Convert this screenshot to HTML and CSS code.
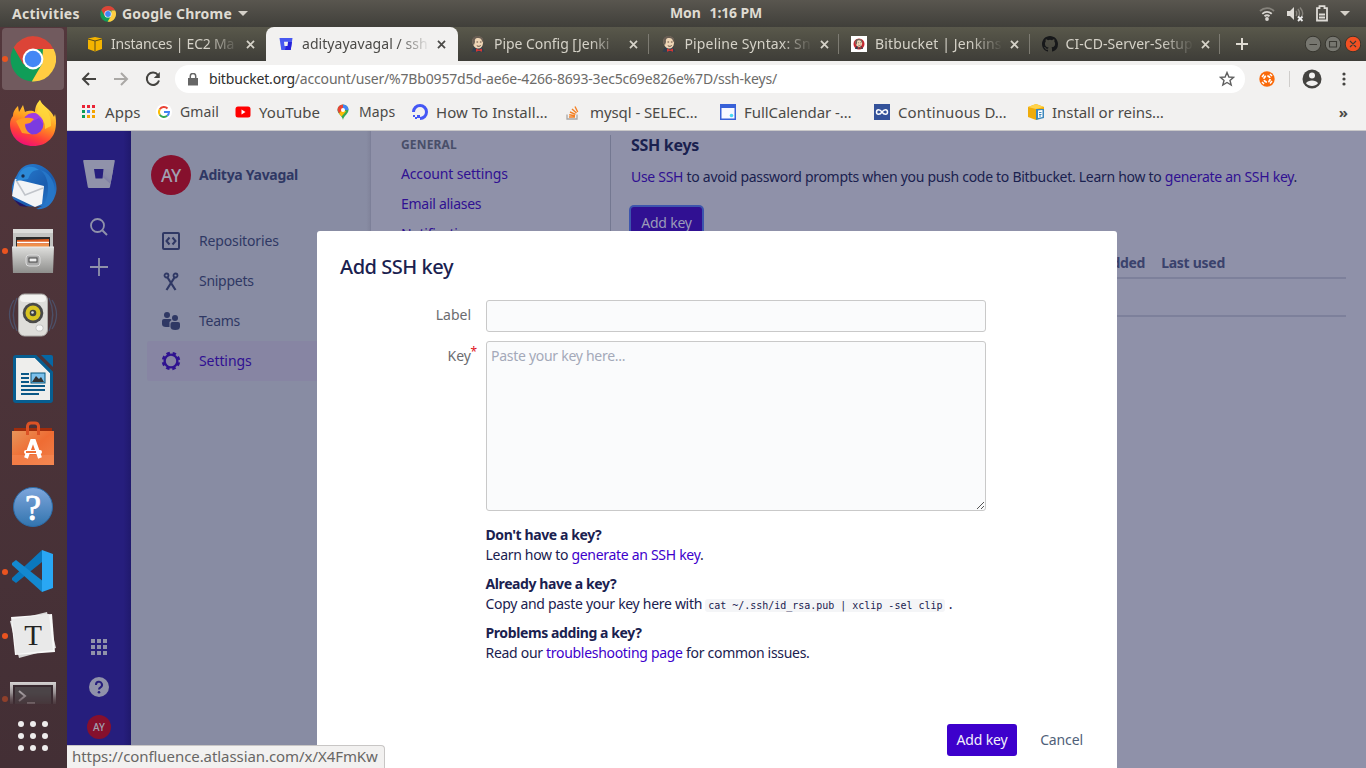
FILE: index.html
```html
<!DOCTYPE html>
<html lang="en">
<head>
<meta charset="utf-8">
<title>adityayavagal / ssh keys</title>
<link rel="stylesheet" href="styles.css">
</head>
<body>
<svg width="0" height="0" class="defs">
  <defs>
    <linearGradient id="steel" x1="0" y1="0" x2="0" y2="1"><stop offset="0" stop-color="#dededc"/><stop offset="1" stop-color="#8e8e8c"/></linearGradient>
    <linearGradient id="fire" x1="0.7" y1="0" x2="0.3" y2="1"><stop offset="0" stop-color="#fff14a"/><stop offset=".45" stop-color="#ff9a1f"/><stop offset=".75" stop-color="#ff4038"/><stop offset="1" stop-color="#ee0a7c"/></linearGradient>
    <linearGradient id="bird" x1="0" y1="0" x2="1" y2="1"><stop offset="0" stop-color="#2a83d6"/><stop offset=".6" stop-color="#1a5cae"/><stop offset="1" stop-color="#2f86d8"/></linearGradient>
    <linearGradient id="bag" x1="0" y1="0" x2="1" y2="1"><stop offset="0" stop-color="#e8955a"/><stop offset=".5" stop-color="#ef6c33"/><stop offset="1" stop-color="#f0804a"/></linearGradient>
    <linearGradient id="help" x1="0" y1="0" x2="0" y2="1"><stop offset="0" stop-color="#7ea6dc"/><stop offset="1" stop-color="#3274ae"/></linearGradient>
    <linearGradient id="term" x1="0" y1="0" x2="0" y2="1"><stop offset="0" stop-color="#d5d3d3"/><stop offset="1" stop-color="#5a4c50"/></linearGradient>
    <linearGradient id="bbfade" x1="1" y1="0" x2="0" y2="1"><stop offset="0" stop-color="#9092aa"/><stop offset=".4" stop-color="#8a8ba8"/><stop offset="1" stop-color="#5e5b98"/></linearGradient>
    <symbol id="chrome" viewBox="0 0 46 46">
      <circle cx="23" cy="23" r="22.5" fill="#109d58"/>
      <path d="M3.6 11.5A22.5 22.5 0 0 1 43.5 13L23 13 13.5 28.5Z" fill="#dc4437"/>
      <path d="M43.6 13A22.5 22.5 0 0 1 21.8 45.5L32 28 33 13Z" fill="#ffcd42"/>
      <circle cx="23" cy="23" r="10.4" fill="#fff"/><circle cx="23" cy="23" r="8.3" fill="#4387f5"/>
    </symbol>
    <symbol id="jenkins" viewBox="0 0 16 16">
      <path d="M1.500 16 3.500 11.500 12 11 14.500 16Z" fill="#313f4d"/>
      <path d="M2.5 5.5C2.3 2 5 .4 8 .4 11.5.4 13.6 3 13 7.3 12.7 10.500 11 12.600 8.500 12.600 5 12.600 2.700 9.500 2.500 5.500Z" fill="#efd6b6"/>
      <path d="M2.500 8C1 2 4 .2 7.500.1 11.500 0 14 2.400 13.400 7L12 5C11.500 2.700 10 1.500 7 2 5 2.400 4.600 4 5 6L4 9Z" fill="#695e54"/>
      <path d="M6.500 6h1.600M9.900 6h1.600M6.800 9.700C8.300 10.600 9.500 10.500 10.700 9.500" stroke="#4c3a30" stroke-width=".9" fill="none"/>
      <path d="M6 12.500 9 13.700 12 12.500 12 15.700 9 14.700 6 15.800Z" fill="#d33833"/>
    </symbol>
    <symbol id="x" viewBox="0 0 10 10"><path d="M1.800 1.800 8.200 8.200M8.200 1.800 1.800 8.200" stroke="currentColor" stroke-width="1.600"/></symbol>
  </defs>
</svg>

<header class="topbar">
  <span class="activities">Activities</span>
  <svg class="app-icon" width="16" height="16"><use href="#chrome"/></svg>
  <span class="app-name">Google Chrome</span><i class="caret"></i>
  <span class="clock"><span>Mon</span><span>1:16 PM</span></span>
  <span class="tray">
    <svg width="16" height="16" viewBox="0 0 16 16" fill="none" stroke="#d8d5d0" stroke-width="1.800"><path d="M1 5C5 1.200 11 1.200 15 5" stroke="#85827b"/><path d="M3.300 7.800C6 5.300 10 5.300 12.700 7.800"/><path d="M5.500 10.300C7 9 9 9 10.500 10.300"/><circle cx="8" cy="13" r="1.900" fill="#d8d5d0" stroke="none"/></svg>
    <svg width="18" height="16" viewBox="0 0 18 16"><path d="M1 5h3l4-4v13l-4-4H1Z" fill="#dedbd6"/><path d="M10 5C11 6 11 9 10 10M12 3C14 6 14 9 12 12M14 1.500C17 5 17 8 16 10" stroke="#85827b" stroke-width="1.500" fill="none"/><path d="M12 10.500 16.500 15M16.500 10.500 12 15" stroke="#eee" stroke-width="1.800"/></svg>
    <svg width="14" height="17" viewBox="0 0 14 17"><path d="M2 3.200H4.500V1.200H9.500V3.200H12V15.500H2Z" fill="none" stroke="#dedbd6" stroke-width="1.800"/><path d="M4 9.500h6M4 12.500h6" stroke="#dedbd6" stroke-width="1.800"/></svg>
    <i class="caret"></i>
  </span>
</header>

<div class="desktop">
  <aside class="dock">
    <div class="launcher current running"><svg width="46" height="46"><use href="#chrome"/></svg></div>
    <div class="launcher"><svg width="48" height="48" viewBox="0 0 48 48"><path d="M4 17C4 12 7 9 9 7L10 13 14 6 16 13C21 11 24 12 26 13 26 7 29 3 31 1 32 6 42 10 45 18L46 15C48 23 47 33 43 38 38 45 31 47 24 47 11 47 1 38 1 25 1 22 2 19 4 17Z" fill="url(#fire)"/><circle cx="24" cy="25" r="10.500" fill="#7b3be0"/><path d="M15 27C14 18 18 14 25 14 31 14 35 19 34 25L30 19Z" fill="#a03ae6"/><path d="M7 22C13 18 20 18 25 20L21 24 16 25C16 31 20 36 27 36L13 34Z" fill="#ff9a25"/><path d="M27 14C30 9 30 5 31 1 33 7 43 12 42 27L36 30C37 23 32 18 27 14Z" fill="#ffd83c" opacity=".8"/></svg></div>
    <div class="launcher"><svg width="50" height="50" viewBox="0 0 50 50"><path d="M9 13C14 1 27-1 37 6 47 13 51 24 47 34 44 43 37 48 28 47L34 44C20 46 7 43 4 34L7 36C2 30 3 22 9 13Z" fill="url(#bird)"/><path d="M7 17 36 24 34 42 27 45 4 34Z" fill="#f3f4f6"/><path d="M8 18 17 33 35 26" fill="none" stroke="#c1c4ca" stroke-width="1.500"/><path d="M11 13C15 3 25 3 31 8 22 8 22 14 20 17L8 19Z" fill="#2c8ad8"/><path d="M32 8C42 15 42 32 36 43L44 39C51 28 44 10 32 8Z" fill="#2676c8"/><path d="M5 37 20 45 12 44Z" fill="#241461"/><circle cx="15" cy="14" r="1.700" fill="#172b4d"/></svg></div>
    <div class="launcher running"><svg width="44" height="46" viewBox="0 0 44 46"><path d="M2 1H42V44H2Z" fill="#c4c4c2"/><path d="M2 1H42V5H2Z" fill="#dcdcda"/><path d="M5 9H39V20H5Z" fill="#2b2a2a"/><path d="M6 12 38 11V20H6Z" fill="#dd5d20"/><path d="M6 14.500H38" stroke="#fff" stroke-width="1.500"/><path d="M6 16H38V20H6Z" fill="#f0904a"/><path d="M1 19H43L42 45H2Z" fill="url(#steel)"/><path d="M1 19H43" stroke="#eee"/><rect x="15" y="27" width="14" height="11" rx="3" fill="#aaa" stroke="#ddd"/><rect x="18" y="30" width="8" height="4" fill="#eee" stroke="#444"/></svg></div>
    <div class="launcher"><svg width="50" height="46" viewBox="0 0 50 46"><path d="M6 8C0 17 0 28 6 37M9 6C4 17 4 28 9 39M44 8C50 17 50 28 44 37M41 6C46 17 46 28 41 39" fill="none" stroke="#4c5068" stroke-width="1.300"/><rect x="10.500" y="2" width="29" height="42" rx="6" fill="#deddda" stroke="#aaa9a6"/><rect x="12" y="3" width="26" height="7" rx="4" fill="#f3f2f0"/><circle cx="25" cy="21" r="10.300" fill="#4a4a49"/><circle cx="25" cy="21" r="7.500" fill="#d9c421"/><circle cx="25" cy="21" r="3.300" fill="#424240"/><circle cx="24.500" cy="20.500" r="1.300" fill="#ddd"/><rect x="28" y="33" width="7" height="6" rx="2.500" fill="#f7f7f7" stroke="#c4c4c2"/></svg></div>
    <div class="launcher"><svg width="42" height="48" viewBox="0 0 42 48"><path d="M4 0H24L41 17V45Q41 48 38 48H4Q1 48 1 45V3Q1 0 4 0Z" fill="#075e91"/><path d="M29 0H39Q41 0 41 2V12Z" fill="#0667a4"/><path d="M4 3H23L38 18V45H4Z" fill="#eeeeec"/><path d="M23 0V3L38 18H41V17L24 0Z" fill="#075e91"/><path d="M9 19h8M9 23h8M9 27h8M9 31h24M9 35h24M9 39h18" stroke="#0a5887" stroke-width="2"/><rect x="19" y="18" width="14" height="10" fill="#7cc1ec" stroke="#05577f"/><path d="M20 27 24 21 27 24 29 22 32 27Z" fill="#333"/></svg></div>
    <div class="launcher"><svg width="42" height="44" viewBox="0 0 42 44"><path d="M2 7H40V18H2Z" fill="#9f2c0c"/><path d="M0 10H42V44H0Z" fill="url(#bag)"/><path d="M15.500 14V5Q16 2 19 2H23Q26 2 26.500 5V14" fill="none" stroke="#dc5225" stroke-width="3"/><path d="M0 34H42V44H0Z" fill="#f68b57" opacity=".5"/><path d="M14 37 20 20H22L28 37" fill="none" stroke="#fff" stroke-width="4"/><rect x="12" y="29" width="18" height="4" rx="2" fill="#fff"/><path d="M14 31h10" stroke="#ee7138" stroke-width="2"/></svg></div>
    <div class="launcher"><svg width="42" height="42" viewBox="0 0 42 42"><circle cx="21" cy="21" r="19.500" fill="url(#help)" stroke="#2b6ca9"/><text x="21" y="34" class="help-mark">?</text></svg></div>
    <div class="launcher running"><svg width="44" height="44" viewBox="0 0 44 44"><path d="M1 29 31 1V13L5 34 1 31Z" fill="#0a78be"/><path d="M5 11 33 33 31 43 1 16V14Z" fill="#1389d0"/><path d="M31 1 42 5V39L31 43Z" fill="#29a7f4"/></svg></div>
    <div class="launcher running"><svg width="48" height="48" viewBox="0 0 48 48"><path d="M1 10 38 1 47 37 10 47Z" fill="#d8d8d8"/><path d="M2 6 43 3 46 41 6 44Z" fill="#f8f8f8"/><path d="M3 8 40 3 44 39 7 43Z" fill="#e9e9e9"/><text x="24" y="34" class="typora">T</text></svg></div>
    <div class="launcher cut running"><svg width="46" height="22" viewBox="0 0 46 22"><path d="M0 0H46V22H0Z" fill="url(#term)"/><path d="M3 3H43V22H3Z" fill="#37292f"/><path d="M5 5H41V22H5Z" fill="#4b4447"/><path d="M9 9 15 14 9 19M17 21h8" fill="none" stroke="#a39c9f" stroke-width="2"/></svg></div>
    <div class="app-grid"><i></i><i></i><i></i><i></i><i></i><i></i><i></i><i></i><i></i></div>
  </aside>

  <main class="window">
    <div class="tabs">
      <div class="tab first"><svg class="fav" width="16" height="16" viewBox="0 0 16 16"><path d="M1 2.500 8 1 15 2.500V13L8 15.500 1 13Z" fill="#f4b400"/><path d="M1 3 8 5 15 3M8 5V15" stroke="#594b1c" stroke-width="1" fill="none"/></svg><span class="title t1">Instances | EC2 Ma</span><svg class="close"><use href="#x"/></svg></div>
      <div class="tab active"><svg class="fav" width="16" height="16" viewBox="0 0 16 16"><path d="M1.500 2H14.500L12.700 14H3.300Z" fill="#4858f0"/><path d="M9 6H14L12.700 14H7Z" fill="#2721d9"/><path d="M6 5.800H10L9.500 10H6.500Z" fill="#f2f1f0"/></svg><span class="title">adityayavagal / ssh</span><svg class="close"><use href="#x"/></svg></div>
      <div class="tab"><svg class="fav" width="16" height="16"><use href="#jenkins"/></svg><span class="title t3">Pipe Config [Jenki</span><svg class="close"><use href="#x"/></svg></div>
      <div class="tab"><svg class="fav" width="16" height="16"><use href="#jenkins"/></svg><span class="title t2">Pipeline Syntax: Sn</span><svg class="close"><use href="#x"/></svg></div>
      <div class="tab"><svg class="fav" width="16" height="16" viewBox="0 0 16 16"><path d="M0 0H16V16H0Z" fill="#fff"/><circle cx="8" cy="8" r="5.500" fill="#c62932"/><svg x="3" y="1" width="10" height="14"><use href="#jenkins"/></svg></svg><span class="title t2">Bitbucket | Jenkins</span><svg class="close"><use href="#x"/></svg></div>
      <div class="tab"><svg class="fav" width="16" height="16" viewBox="0 0 16 16"><path fill="#17181a" d="M8 0C3.580 0 0 3.580 0 8c0 3.540 2.290 6.530 5.470 7.590.4.070.55-.17.55-.38v-1.490c-2.010.37-2.530-.49-2.690-.94-.09-.23-.48-.94-.82-1.130-.28-.15-.68-.52-.01-.53.63-.01 1.080.58 1.230.82.72 1.210 1.870.87 2.330.66.07-.52.28-.87.51-1.070-1.780-.2-3.640-.89-3.640-3.950 0-.87.31-1.590.82-2.150-.08-.2-.36-1.020.08-2.120 0 0 .67-.21 2.200.82a7.500 7.500 0 0 1 4 0c1.530-1.040 2.200-.82 2.200-.82.44 1.100.16 1.920.08 2.120.51.56.82 1.270.82 2.150 0 3.070-1.870 3.750-3.650 3.950.29.25.54.73.54 1.480v2.190c0 .21.15.46.55.38A8 8 0 0 0 16 8c0-4.420-3.580-8-8-8z"/></svg><span class="title">CI-CD-Server-Setup</span><svg class="close"><use href="#x"/></svg></div>
      <svg class="newtab" width="14" height="14" viewBox="0 0 14 14"><path d="M7 1V13M1 7H13" stroke="#dfdbd2" stroke-width="2"/></svg>
      <div class="controls">
        <svg width="56" height="18" viewBox="0 0 56 18"><g fill="#777770" stroke="#37362f"><circle cx="8" cy="9" r="7.800"/><circle cx="28" cy="9" r="7.800"/><circle cx="48" cy="9" r="7.800" fill="#f25022"/></g><path d="M4.500 9.500h7.500M24.500 6.500h7v5.500h-7ZM45 6 51 12M51 6 45 12" stroke="#3b3a34" stroke-width="1.100" fill="none"/></svg>
      </div>
    </div>

    <div class="toolbar">
      <svg class="nav" width="16" height="16" viewBox="0 0 16 16"><path d="M15 8H2M8 2 2 8 8 14" fill="none" stroke="#444340" stroke-width="2"/></svg>
      <svg class="nav" width="16" height="16" viewBox="0 0 16 16"><path d="M1 8H14M8 2 14 8 8 14" fill="none" stroke="#aaa8a5" stroke-width="2"/></svg>
      <svg class="nav" width="16" height="16" viewBox="0 0 16 16"><path d="M13 4A6.200 6.200 0 1 0 14 9.500" fill="none" stroke="#444340" stroke-width="2"/><path d="M14.800 1V7H8.800Z" fill="#444340"/></svg>
      <div class="omnibox">
        <svg width="10" height="13" viewBox="0 0 10 13"><path d="M0 5H10V12.500H0Z" fill="#666"/><path d="M2.300 5.500V3A2.700 2.500 0 0 1 7.700 3V5.500" fill="none" stroke="#666" stroke-width="1.500"/></svg>
        <span class="url"><b>bitbucket.org</b>/account/user/%7Bb0957d5d-ae6e-4266-8693-3ec5c69e826e%7D/ssh-keys/</span>
        <svg class="star" width="16" height="16" viewBox="0 0 16 16"><path d="M8 1.500 9.900 6 14.600 6.300 11 9.400 12.200 14 8 11.500 3.800 14 5 9.400 1.400 6.300 6.100 6Z" fill="none" stroke="#5f5f5f" stroke-width="1.400"/></svg>
      </div>
      <svg class="ext" width="16" height="16" viewBox="0 0 16 16"><circle cx="8" cy="8" r="7.700" fill="#fa6a0a"/><circle cx="8" cy="8" r="3.100" fill="none" stroke="#fff" stroke-width="1.800" stroke-dasharray="3.400 1.470"/><path d="M3 6 5 3.500M11 3 13 5M13 10 11 12.500M5 13 3 11" stroke="#fff" stroke-width="1.500"/></svg>
      <i class="vline"></i>
      <svg width="20" height="20" viewBox="0 0 20 20"><circle cx="10" cy="10" r="9.500" fill="#444340"/><circle cx="10" cy="6.500" r="3" fill="#f2f1f0"/><path d="M4 14.300C6 10.500 14 10.500 16 14.300 13 18 7 18 4 14.300Z" fill="#f2f1f0"/></svg>
      <svg class="more" width="4" height="14" viewBox="0 0 4 14"><g fill="#444340"><circle cx="2" cy="2" r="1.600"/><circle cx="2" cy="7" r="1.600"/><circle cx="2" cy="12" r="1.600"/></g></svg>
    </div>

    <nav class="bookmarks">
      <span class="bm" style="width:75px"><svg width="16" height="16" viewBox="0 0 16 16"><path d="M1 1h3v3H1ZM6 1h3v3H6ZM11 1h3v3h-3Z" fill="#ea2335"/><path d="M1 6h3v3H1ZM1 11h3v3H1Z" fill="#0b9d58"/><path d="M6 6h3v3H6Z" fill="#4285f4"/><path d="M11 6h3v3h-3ZM6 11h3v3H6ZM11 11h3v3h-3Z" fill="#f4a400"/></svg><span class="apps">Apps</span></span>
      <span class="bm" style="width:79px"><svg width="16" height="16" viewBox="0 0 16 16"><circle cx="8" cy="8" r="8" fill="#fff"/><g fill="none" stroke-width="2"><path d="M3.800 5.300A5 5 0 0 1 11.500 4.500" stroke="#ea4335"/><path d="M3.800 5.300A5 5 0 0 0 3.800 10.700" stroke="#fbbc05"/><path d="M3.800 10.700A5 5 0 0 0 11.200 11.800" stroke="#34a853"/><path d="M11.200 11.800A5 5 0 0 0 13 8H8" stroke="#4285f4"/></g></svg><span class="plain">Gmail</span></span>
      <span class="bm" style="width:100px"><svg width="16" height="16" viewBox="0 0 16 16"><rect x=".5" y="2.500" width="15" height="11" rx="2.500" fill="#f00"/><path d="M6.500 5.500 10.500 8 6.500 10.500Z" fill="#fff"/></svg><span>YouTube</span></span>
      <span class="bm" style="width:77px"><svg width="16" height="16" viewBox="0 0 16 16"><path d="M2.500 6A5.500 5.500 0 0 1 13.500 6C13.500 10 9 11 8 16 7 11 2.500 10 2.500 6Z" fill="#34a853"/><path d="M8 .5A5.500 5.500 0 0 1 13.500 6L8 6Z" fill="#4285f4"/><path d="M2.500 6A5.500 5.500 0 0 1 8 .5L8 6 4 9.500Z" fill="#ea4335"/><path d="M4 9.500 8 5 11 7.500 6.500 12.500Z" fill="#fbbc05"/><circle cx="8" cy="6" r="2" fill="#fff"/></svg><span class="plain">Maps</span></span>
      <span class="bm" style="width:154px"><svg width="16" height="16" viewBox="0 0 16 16"><path d="M8 14.500A6.500 6.500 0 1 0 1.500 8" fill="none" stroke="#4457f5" stroke-width="3"/><path d="M5 11h3v3H5ZM3 13h2v2H3ZM1 11h2v2H1Z" fill="#4457f5"/></svg><span>How To Install…</span></span>
      <span class="bm" style="width:154px"><svg width="16" height="16" viewBox="0 0 16 16"><path d="M1 10.500V15H11V10.500" fill="none" stroke="#a9a7a5" stroke-width="1.300"/><path d="M3 13H9M3.200 10.700 9 11.700M4 8 9.500 10.300M6 5 10.500 9M9 2.500 11.700 8" stroke="#f48024" stroke-width="1.400"/></svg><span class="sql">mysql - SELEC…</span></span>
      <span class="bm" style="width:154px"><svg width="16" height="16" viewBox="0 0 16 16"><path d="M0 0H16V16H0Z" fill="#3861d8"/><path d="M1.500 4H14.500V14.500H1.500Z" fill="#f8f9ff"/><circle cx="11.500" cy="11.500" r="1.800" fill="#49d9f5"/></svg><span class="fc">FullCalendar -…</span></span>
      <span class="bm" style="width:154px"><svg width="16" height="16" viewBox="0 0 16 16"><path d="M0 0H16V16H0Z" fill="#34529a"/><path d="M8 8C6 5 2.500 5 2.500 8S6 11 8 8 13.500 5 13.500 8 10 11 8 8" fill="none" stroke="#fff" stroke-width="1.500"/></svg><span class="cd">Continuous D…</span></span>
      <span class="bm" style="width:150px"><svg width="16" height="16" viewBox="0 0 16 16"><path d="M0 3 8 0 16 3V13L8 16 0 13Z" fill="#efac0b"/><path d="M0 3 8 0 16 3 8 5Z" fill="#ffd34a"/><path d="M8 5H16V14L8 16Z" fill="#3c88bd"/><path d="M10 6.500 14.500 6V13L10 14Z" fill="#fff"/><path d="M11 8.500h2.500M11 10.500h2.500M11 12h2" stroke="#3c88bd"/></svg><span class="inst">Install or reins…</span></span>
      <span class="overflow">»</span>
    </nav>

    <section class="page">
      <aside class="global-nav">
        <svg class="logo" width="32" height="28" viewBox="0 0 32 28"><path d="M1 0H31Q32 0 31.800 1L27 27Q26.800 28 26 28H6Q5 28 4.800 27L.2 1Q0 0 1 0Z" fill="#9092aa"/><path d="M11 9H30.200L27.500 24Z" fill="url(#bbfade)"/><path d="M11 9H20.500L19.500 18.500H12.500Z" fill="#261e7d"/></svg>
        <svg class="find" width="18" height="18" viewBox="0 0 18 18"><circle cx="7.500" cy="7.500" r="6.500" fill="none" stroke="#9092aa" stroke-width="1.800"/><path d="M12.500 12.500 17 17" stroke="#9092aa" stroke-width="2"/></svg>
        <svg class="plus" width="18" height="18" viewBox="0 0 18 18"><path d="M9 0V18M0 9H18" stroke="#9092aa" stroke-width="1.800"/></svg>
        <svg class="switcher" width="16" height="16" viewBox="0 0 16 16"><path d="M0 0h4v4H0ZM6 0h4v4H6ZM12 0h4v4h-4ZM0 6h4v4H0ZM6 6h4v4H6ZM12 6h4v4h-4ZM0 12h4v4H0ZM6 12h4v4H6ZM12 12h4v4h-4Z" fill="#9092aa"/></svg>
        <svg class="qmark" width="20" height="20" viewBox="0 0 20 20"><circle cx="10" cy="10" r="10" fill="#9092aa"/><path d="M7 8A3 3 0 1 1 11.500 10.300Q10 11.200 10 12.500" fill="none" stroke="#261e7d" stroke-width="2"/><circle cx="10" cy="15.300" r="1.300" fill="#261e7d"/></svg>
        <span class="avatar small">AY</span>
      </aside>
      <aside class="sidebar">
        <div class="user"><span class="avatar">AY</span><span>Aditya Yavagal</span></div>
        <div class="item"><svg width="20" height="20" viewBox="0 0 20 20" fill="none" stroke="#2f3864" stroke-width="2"><rect x="2" y="2" width="16" height="16" rx="1"/><path d="M8.500 6.500 5.500 10 8.500 13.500M11.500 6.500 14.500 10 11.500 13.500"/></svg><span class="repo">Repositories</span></div>
        <div class="item"><svg width="20" height="20" viewBox="0 0 20 20" fill="none" stroke="#2f3864" stroke-width="1.800"><circle cx="5.500" cy="4.500" r="2"/><circle cx="14.500" cy="4.500" r="2"/><path d="M6.500 6.500 14.500 19M13.500 6.500 5.500 19" stroke-width="2.200"/></svg><span>Snippets</span></div>
        <div class="item"><svg width="20" height="20" viewBox="0 0 20 20" fill="#2f3864"><circle cx="6" cy="4" r="3"/><path d="M1 10Q1 8 3 8H9Q10.500 8 10.500 9L8.500 11V16H5Q1 16 1 13Z"/><circle cx="14" cy="7" r="3"/><path d="M9.500 13Q9.500 11 11.500 11H17Q19 11 19 13V15.500Q19 19 14.200 19 9.500 19 9.500 15.500Z"/></svg><span>Teams</span></div>
        <div class="item selected"><svg width="20" height="20" viewBox="0 0 20 20"><circle cx="10" cy="10" r="8" fill="none" stroke="#2f1290" stroke-width="2.500" stroke-dasharray="3.500 2.783" transform="rotate(10 10 10)"/><circle cx="10" cy="10" r="6.400" fill="none" stroke="#2f1290" stroke-width="2.400"/></svg><span class="set">Settings</span></div>
      </aside>
      <div class="settings-nav">
        <h2>General</h2>
        <a class="acct">Account settings</a>
        <a>Email aliases</a>
        <a>Notifications</a>
      </div>
      <div class="content">
        <h1>SSH keys</h1>
        <p><a>Use SSH</a> to avoid password prompts when you push code to Bitbucket. Learn how to <a>generate an SSH key</a>.</p>
        <button class="add">Add key</button>
        <div class="table-head"><span>Added</span><span>Last used</span></div>
        <div class="table-row"></div>
      </div>
    </section>
  </main>
</div>

<div class="dialog">
  <h2>Add SSH key</h2>
  <div class="field"><label class="label">Label</label><div class="input"></div></div>
  <div class="field key"><label>Key<sup>*</sup></label><div class="input area">Paste your key here...<svg width="9" height="9" viewBox="0 0 9 9"><path d="M1 8 8 1M5 8 8 5" stroke="#555" stroke-width="1"/></svg></div></div>
  <div class="help">
    <p><strong>Don't have a key?</strong><br>Learn how to <a>generate an SSH key</a>.</p>
    <p><strong>Already have a key?</strong><br>Copy and paste your key here with <code>cat ~/.ssh/id_rsa.pub | xclip -sel clip</code> .</p>
    <p><strong>Problems adding a key?</strong><br>Read our <a>troubleshooting page</a> for common issues.</p>
  </div>
  <footer><button class="primary">Add key</button><button class="cancel">Cancel</button></footer>
</div>
<div class="status">https://confluence.atlassian.com/x/X4FmKw</div>
</body>
</html>
```
FILE: styles.css
```css
* { box-sizing: border-box; }
body { margin: 0; width: 1366px; height: 768px; overflow: hidden; display: flex; flex-direction: column; position: relative; font: 14px/20px "Noto Sans", "Open Sans", sans-serif; white-space: nowrap; background: #8f91a9; }
svg { flex: none; display: block; }
.defs { position: absolute; }
h1, h2, p { margin: 0; }
button { border: 0; padding: 0; font: inherit; letter-spacing: inherit; }

.topbar { height: 27px; flex: none; display: flex; align-items: center; padding: 0 16px 0 12px; background: linear-gradient(#59564f, #403f3a); color: #dfdbd2; font-weight: 700; letter-spacing: .28px; position: relative; }
.activities { width: 88px; }
.app-name { margin-left: 6px; letter-spacing: .19px; }
.caret { border: 5px solid transparent; border-top-color: #d4d0c8; border-bottom: 0; margin-left: 6px; }
.clock { position: absolute; left: 670px; top: 3px; display: flex; gap: 9px; letter-spacing: -.15px; }
.tray { margin-left: auto; display: flex; align-items: center; gap: 11px; }
.tray .caret { margin-left: 0; }

.desktop { flex: 1; display: flex; min-height: 0; }
.dock { width: 67px; flex: none; background: linear-gradient(#53373c, #432f35); display: flex; flex-direction: column; align-items: center; }
.launcher { width: 100%; height: 64.1px; flex: none; display: flex; align-items: center; justify-content: center; padding: 0 1px 1px 0; position: relative; }
.current::before { content: ""; position: absolute; inset: 1px 3px 1px 2px; border-radius: 4px; background: #715a5e; }
.launcher svg { position: relative; }
.running::after { content: ""; position: absolute; left: 2px; top: 29px; width: 6px; height: 6px; border-radius: 50%; background: #ea5420; }
.cut { height: 36px; align-items: flex-start; padding-top: 14px; }
.cut svg { -webkit-mask-image: linear-gradient(#000 50%, rgba(0,0,0,.35)); mask-image: linear-gradient(#000 50%, rgba(0,0,0,.35)); }
.cut::after { top: 28px; opacity: .45; }
.help-mark { font: 36px "Liberation Serif", serif; fill: #fff; stroke: #fff; stroke-width: .8px; text-anchor: middle; }
.typora { font: 29px "Liberation Serif", serif; fill: #222; text-anchor: middle; }
.app-grid { display: grid; grid-template-columns: repeat(3, 6px); gap: 6px; margin-top: 17px; margin-right: 1px; }
.app-grid i { width: 6px; height: 6px; border-radius: 50%; background: #eeecec; }

.window { width: 1299px; display: flex; flex-direction: column; }
.tabs { height: 34px; flex: none; display: flex; align-items: stretch; background: linear-gradient(#59584b, #3e3d38); color: #d5d2c8; }
.tab { width: 190.500px; flex: none; display: flex; align-items: center; padding-left: 12px; position: relative; letter-spacing: 0; }
.tab.first { width: 199px; padding-left: 20px; }
.tab.active { width: 192px; background: #f2f1f0; border-radius: 8px 8px 0 0; color: #4b4a47; }
.tab:not(.first):not(.active)::after { content: ""; position: absolute; right: 0; top: 7px; height: 20px; width: 1px; background: #7d7b72; }
.title { width: 128px; margin-left: 8px; overflow: hidden; letter-spacing: .05px; -webkit-mask-image: linear-gradient(90deg, #000 75%, transparent 100%); mask-image: linear-gradient(90deg, #000 75%, transparent 100%); }
.title.t1 { letter-spacing: -.2px; }
.title.t2 { letter-spacing: .14px; }
.title.t3 { letter-spacing: -.05px; }
.close { width: 11px; height: 11px; margin-left: 6px; }
.newtab { align-self: center; margin-left: 15px; }
.controls { margin-left: auto; display: flex; align-items: center; padding-right: 5px; }

.toolbar { height: 36px; flex: none; display: flex; align-items: center; background: #f2f1f0; padding-left: 14px; }
.nav { margin-right: 16px; }
.omnibox { width: 1070px; height: 28px; margin-left: -2px; border-radius: 14px; background: #fff; display: flex; align-items: center; padding: 0 10px 0 13px; }
.url { margin-left: 11px; color: #6c6b69; letter-spacing: -.18px; }
.url b { font-weight: 400; color: #2e2e2d; }
.star { margin-left: auto; }
.ext { margin-left: 14px; }
.vline { width: 1px; height: 16px; background: #cfcdcb; margin: 0 12px 0 14px; }
.more { margin-left: 20px; }

.bookmarks { height: 34px; flex: none; display: flex; align-items: center; background: #f2f1f0; border-bottom: 1px solid #c9c8c9; padding: 0 18px 4px 14px; color: #4b4a47; font-size: 15px; }
.bm { display: flex; align-items: center; gap: 8px; flex: none; letter-spacing: .05px; }
.bm .plain { font-size: 14px; letter-spacing: .1px; }
.bm .sql, .bm .fc { letter-spacing: -.08px; }
.bm .cd { letter-spacing: .12px; }
.bm .inst { letter-spacing: -.05px; }
.overflow { margin-left: auto; font-weight: 700; }

.page { flex: 1; min-height: 0; display: flex; background: #8f91a9; color: #1a214f; letter-spacing: -.28px; }
.page a { color: #301092; }
.global-nav { width: 64px; background: linear-gradient(90deg, #261e7d 88%, #20196d); display: flex; flex-direction: column; align-items: center; padding-top: 29px; }
.find { margin-top: 30px; }
.plus { margin-top: 22px; }
.switcher { margin-top: 363px; }
.qmark { margin-top: 22px; }
.avatar { width: 40px; height: 40px; border-radius: 50%; background: #86102d; color: #a1a0b1; display: flex; align-items: center; justify-content: center; font-size: 17.500px; font-weight: 500; flex: none; }
.avatar.small { width: 24px; height: 24px; margin-top: 18px; font-size: 10px; letter-spacing: 0; }
.sidebar { width: 240px; background: linear-gradient(90deg, #888ca3 98.500%, #81849b); padding: 24px 0 0 16px; color: #2f3864; border-right: 1px solid #7d8099; }
.user { display: flex; align-items: center; gap: 8px; padding-left: 4px; margin-bottom: 26px; font-weight: 700; letter-spacing: -.29px; }
.item { height: 40px; display: flex; align-items: center; gap: 18px; padding-left: 14px; border-radius: 3px 0 0 3px; }
.repo { letter-spacing: -.15px; }
.set { letter-spacing: -.08px; }
.item.selected { background: #8785a3; color: #301092; }
.settings-nav { width: 239px; padding: 4px 0 0 30px; display: flex; flex-direction: column; gap: 10px; }
.settings-nav h2 { font-size: 12px; line-height: 20px; text-transform: uppercase; color: #494f69; letter-spacing: .17px; margin-bottom: -1px; }
.acct { letter-spacing: -.15px; }
.content { flex: 1; margin-top: 4px; padding: 0 20px 0 20px; border-left: 1px solid #747891; }
h1 { font-size: 16px; line-height: 21px; letter-spacing: -.29px; }
.content p { margin-top: 11px; letter-spacing: -.29px; }
.add { margin-top: 20px; width: 71px; height: 32px; border-radius: 3px; background: #301092; color: #9b9bb8; box-shadow: 0 0 0 2px #3d55ad; letter-spacing: -.2px; display: block; }
.table-head { display: flex; gap: 16px; padding: 14px 0 3px 471px; height: 40px; border-bottom: 2px solid #7d809b; font-weight: 700; color: #3a426c; }
.table-row { height: 38px; border-bottom: 2px solid #7d809b; }

.dialog { position: absolute; left: 317px; top: 231px; width: 800px; height: 537px; background: #fff; border-radius: 3px 3px 0 0; color: #1a214f; padding: 24px; letter-spacing: -.28px; display: flex; flex-direction: column; }
.dialog h2 { font-size: 20px; line-height: 24px; font-weight: 500; letter-spacing: -.46px; text-indent: -1px; }
.field { display: flex; margin-top: 21px; color: #6b6c70; }
.field.key { margin-top: 9px; }
.field label { width: 145px; padding: 5px 15px 0 0; text-align: right; letter-spacing: 0; position: relative; }
.field sup { position: absolute; right: 9px; top: 1px; color: #e0101c; font-size: 12px; line-height: 20px; }
.input { width: 500px; height: 32px; border: 1px solid #c9c9c9; border-radius: 3px; background: #fafbfc; color: #a4a9b9; padding: 4px; position: relative; }
.area { height: 170px; }
.area svg { position: absolute; right: 0; bottom: 0; }
.help { margin: 14px 0 0 144.500px; display: flex; flex-direction: column; gap: 9px; }
.help p { letter-spacing: -.3px; }
.help strong { letter-spacing: -.4px; }
.help a { color: #3d00cc; }
code { font: 10px/14px "DejaVu Sans Mono", monospace; letter-spacing: -.02px; background: #f4f5f7; border-radius: 3px; padding: 1px 3px; }
footer { margin: auto -3px -12px 0; display: flex; justify-content: flex-end; }
footer button { height: 32px; width: 70px; border-radius: 3px; letter-spacing: -.15px; }
.primary { background: #3d00cc; color: #f3f0fb; }
.cancel { background: none; color: #505f79; margin: 0 0 0 10px; width: 69px; }

.status { position: absolute; left: 67px; bottom: 0; width: 318px; height: 23px; background: #f2f1f0; border: 1px solid #c8c6c5; border-left: 0; border-bottom: 0; border-radius: 0 4px 0 0; color: #686765; font-size: 15px; line-height: 21px; padding-left: 5px; letter-spacing: -.07px; }
```
